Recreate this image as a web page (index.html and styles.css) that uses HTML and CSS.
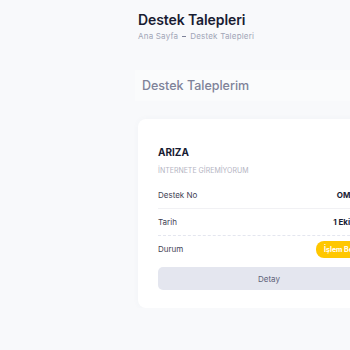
FILE: index.html
```html
<!DOCTYPE html>
<html lang="tr">
<head>
    <meta charset="UTF-8">
    <meta name="viewport" content="width=device-width, initial-scale=1.0">
    <title>Destek Talepleri</title>
    <link rel="stylesheet" href="styles.css">
</head>
<body>
    <div class="page">
        <div class="toolbar">
            <h1 class="page-title">Destek Talepleri</h1>
            <div class="breadcrumb">
                <span>Ana Sayfa</span>
                <span class="bullet"></span>
                <span>Destek Talepleri</span>
            </div>
        </div>

        <div class="section-head">
            <h2>Destek Taleplerim</h2>
        </div>

        <div class="ticket-card">
            <div class="ticket-type">ARIZA</div>
            <div class="ticket-subject">İNTERNETE GİREMİYORUM</div>

            <div class="ticket-row">
                <span class="label">Destek No</span>
                <span class="value">OM102345</span>
            </div>
            <div class="ticket-row">
                <span class="label">Tarih</span>
                <span class="value">1 Ekim 2023</span>
            </div>
            <div class="ticket-row last">
                <span class="label">Durum</span>
                <span class="badge">İşlem Bekliyor</span>
            </div>

            <button class="detail-btn">Detay</button>
        </div>
    </div>
</body>
</html>
```

FILE: styles.css
```css
html, body {
    margin: 0;
    padding: 0;
    overflow: hidden;
}

body {
    background-color: #f8f9fb;
    font-family: Inter, "Open Sans", sans-serif;
    color: #181c32;
}

.page {
    width: 300px;
    padding: 11px 0 0 138px;
}

.toolbar {
    margin-bottom: 29px;
}

.page-title {
    margin: 0;
    font-size: 14px;
    font-weight: 600;
    letter-spacing: -0.1px;
    line-height: 17px;
    color: #181c32;
}

.breadcrumb {
    display: flex;
    align-items: center;
    gap: 4px;
    margin-top: 3px;
    font-size: 8px;
    letter-spacing: 0.2px;
    color: #a1a5b7;
}

.bullet {
    width: 4px;
    height: 1px;
    background-color: #7e8299;
}

.section-head {
    margin-left: -3px;
    height: 31px;
    display: flex;
    align-items: center;
    padding-left: 7px;
    background-color: #fafbfc;
}

.section-head h2 {
    margin: 0;
    font-size: 12.5px;
    font-weight: 500;
    color: #7e8299;
}

.ticket-card {
    margin-top: 18px;
    width: 222px;
    padding: 27px 20px 18px;
    background-color: #fff;
    border-radius: 8px;
    box-shadow: 0 0 6px rgba(80, 90, 120, 0.04);
}

.ticket-type {
    font-size: 10px;
    font-weight: 700;
    color: #181c32;
}

.ticket-subject {
    margin-top: 8px;
    font-size: 7px;
    color: #b5b5c3;
    margin-bottom: 7px;
}

.ticket-row {
    display: flex;
    justify-content: space-between;
    align-items: center;
    height: 26px;
    font-size: 8px;
    border-bottom: 1px solid #f1f1f4;
}

.ticket-row + .ticket-row {
    border-bottom-style: dashed;
    border-color: #e4e6ef;
}

.ticket-row.last {
    border-bottom: none;
}

.label {
    color: #3f4254;
}

.value {
    font-weight: 700;
    color: #181c32;
}

.badge {
    background-color: #ffc700;
    color: #fff;
    font-weight: 700;
    font-size: 7px;
    padding: 4px 8px;
    border-radius: 8px;
}

.detail-btn {
    display: block;
    width: 100%;
    height: 23px;
    margin-top: 5px;
    border: none;
    border-radius: 5px;
    background-color: #e4e6ef;
    color: #5e6278;
    font-family: inherit;
    font-size: 8px;
    cursor: pointer;
}
```
